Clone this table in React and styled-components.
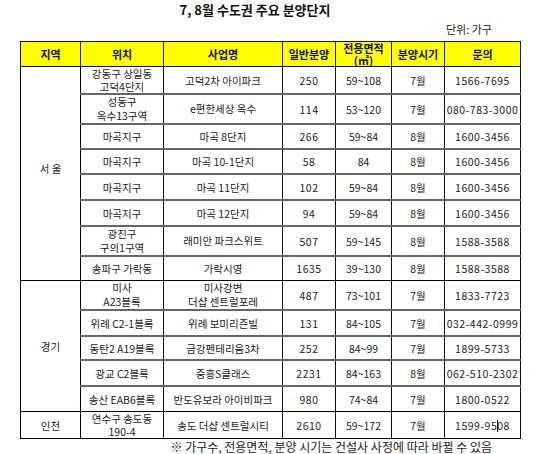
import React from "react";
import styled, { createGlobalStyle } from "styled-components";

const GlobalStyle = createGlobalStyle`
  html, body {
    margin: 0;
    padding: 0;
    background: #fff;
  }
  body {
    font-family: "Noto Sans CJK KR", "Noto Sans", sans-serif;
    color: #222;
  }
`;

const rows = [
  { region: "서 울", span: 8, loc: ["강동구 상일동", "고덕4단지"], name: ["고덕2차 아이파크"], units: "250", area: "59~108", month: "7월", tel: "1566-7695", h: 26 },
  { loc: ["성동구", "옥수13구역"], name: ["e편한세상 옥수"], units: "114", area: "53~120", month: "7월", tel: "080-783-3000", h: 30 },
  { loc: ["마곡지구"], name: ["마곡 8단지"], units: "266", area: "59~84", month: "8월", tel: "1600-3456", h: 25 },
  { loc: ["마곡지구"], name: ["마곡 10-1단지"], units: "58", area: "84", month: "8월", tel: "1600-3456", h: 25 },
  { loc: ["마곡지구"], name: ["마곡 11단지"], units: "102", area: "59~84", month: "8월", tel: "1600-3456", h: 26 },
  { loc: ["마곡지구"], name: ["마곡 12단지"], units: "94", area: "59~84", month: "8월", tel: "1600-3456", h: 26 },
  { loc: ["광진구", "구의1구역"], name: ["래미안 파크스위트"], units: "507", area: "59~145", month: "8월", tel: "1588-3588", h: 30 },
  { loc: ["송파구 가락동"], name: ["가락시영"], units: "1635", area: "39~130", month: "8월", tel: "1588-3588", h: 25, last: true },
  { region: "경기", span: 5, loc: ["미사", "A23블록"], name: ["미사강변", "더샵 센트럴포레"], units: "487", area: "73~101", month: "7월", tel: "1833-7723", h: 28 },
  { loc: ["위례 C2-1블록"], name: ["위례 보미리즌빌"], units: "131", area: "84~105", month: "7월", tel: "032-442-0999", h: 26 },
  { loc: ["동탄2 A19블록"], name: ["금강펜테리움3차"], units: "252", area: "84~99", month: "7월", tel: "1899-5733", h: 24 },
  { loc: ["광교 C2블록"], name: ["중흥S클래스"], units: "2231", area: "84~163", month: "8월", tel: "062-510-2302", h: 26 },
  { loc: ["송산 EAB6블록"], name: ["반도유보라 아이비파크"], units: "980", area: "74~84", month: "7월", tel: "1800-0522", h: 26, last: true },
  { region: "인천", span: 1, loc: ["연수구 송도동", "190-4"], name: ["송도 더샵 센트럴시티"], units: "2610", area: "59~172", month: "7월", tel: "caret", h: 26, last: true },
];

const Page = styled.div`
  width: 540px;
  padding: 0 20px;
  box-sizing: border-box;
`;

const Title = styled.div`
  font-size: 13px;
  font-weight: 700;
  line-height: 20px;
  text-align: center;
  color: #111;
  padding-right: 30px;
`;

const Note = styled.div`
  font-size: ${(p) => p.$size}px;
  line-height: ${(p) => p.$lh}px;
  text-align: right;
  padding-right: 28px;
  margin: ${(p) => p.$margin};
  color: #222;
`;

const Table = styled.table`
  width: 500px;
  border-collapse: collapse;
  table-layout: fixed;
  border: 1px solid #000;
`;

const Head = styled.th`
  background: #ffff00;
  font-size: 11px;
  font-weight: 700;
  line-height: 12px;
  height: 24px;
  padding: 0;
  border: 1px solid #111;
  color: #111;
  overflow: hidden;
`;

const Cell = styled.td`
  font-size: 10.5px;
  line-height: ${(p) => (p.$tall ? 14 : 13)}px;
  letter-spacing: ${(p) => (p.$digits ? "0.5px" : "0")};
  text-align: center;
  padding: 0;
  height: ${(p) => p.$h - 2}px;
  border-left: 1px solid #111;
  border-right: 1px solid #111;
  border-bottom: ${(p) => (p.$last ? "1px solid #000" : "2px solid #666")};
  white-space: nowrap;
`;

const Region = styled.td`
  font-size: 10.5px;
  text-align: center;
  padding: 0;
  border: 1px solid #000;
  vertical-align: middle;
  padding-bottom: ${(p) => p.$lift}px;
`;

const Caret = styled.span`
  display: inline-block;
  width: 1px;
  height: 12px;
  background: #000;
  vertical-align: -2px;
  margin-right: -1px;
`;

const Lines = ({ items, tall, h, last }) => (
  <Cell $tall={tall} $h={h} $last={last}>
    {items.map((t, i) => (
      <div key={i}>{t}</div>
    ))}
  </Cell>
);

export default function App() {
  const widths = [60, 83, 119, 53, 56, 53, 76];
  return (
    <Page>
      <GlobalStyle />
      <Title>7, 8월 수도권 주요 분양단지</Title>
      <Note $size={11} $lh={16} $margin="1px 0 4px">단위: 가구</Note>
      <Table>
        <colgroup>
          {widths.map((w, i) => (
            <col key={i} style={{ width: w }} />
          ))}
        </colgroup>
        <thead>
          <tr>
            <Head>지역</Head>
            <Head>위치</Head>
            <Head>사업명</Head>
            <Head>일반분양</Head>
            <Head>
              전용면적
              <br />
              (㎡)
            </Head>
            <Head>분양시기</Head>
            <Head>문의</Head>
          </tr>
        </thead>
        <tbody>
          {rows.map((r, i) => (
            <tr key={i}>
              {r.region && (
                <Region rowSpan={r.span} $lift={r.span === 8 ? 10 : 0}>
                  {r.region}
                </Region>
              )}
              <Lines items={r.loc} tall={r.h >= 28} h={r.h} last={r.last} />
              <Lines items={r.name} tall={r.h >= 28} h={r.h} last={r.last} />
              <Cell $h={r.h} $last={r.last} $digits>{r.units}</Cell>
              <Cell $h={r.h} $last={r.last}>{r.area}</Cell>
              <Cell $h={r.h} $last={r.last}>{r.month}</Cell>
              <Cell $h={r.h} $last={r.last} $digits>
                {r.tel === "caret" ? (
                  <>
                    1599-95
                    <Caret />
                    08
                  </>
                ) : (
                  r.tel
                )}
              </Cell>
            </tr>
          ))}
        </tbody>
      </Table>
      <Note $size={12} $lh={14} $margin="1px 0 0">
        ※ 가구수, 전용면적, 분양 시기는 건설사 사정에 따라 바뀔 수 있음
      </Note>
    </Page>
  );
}
